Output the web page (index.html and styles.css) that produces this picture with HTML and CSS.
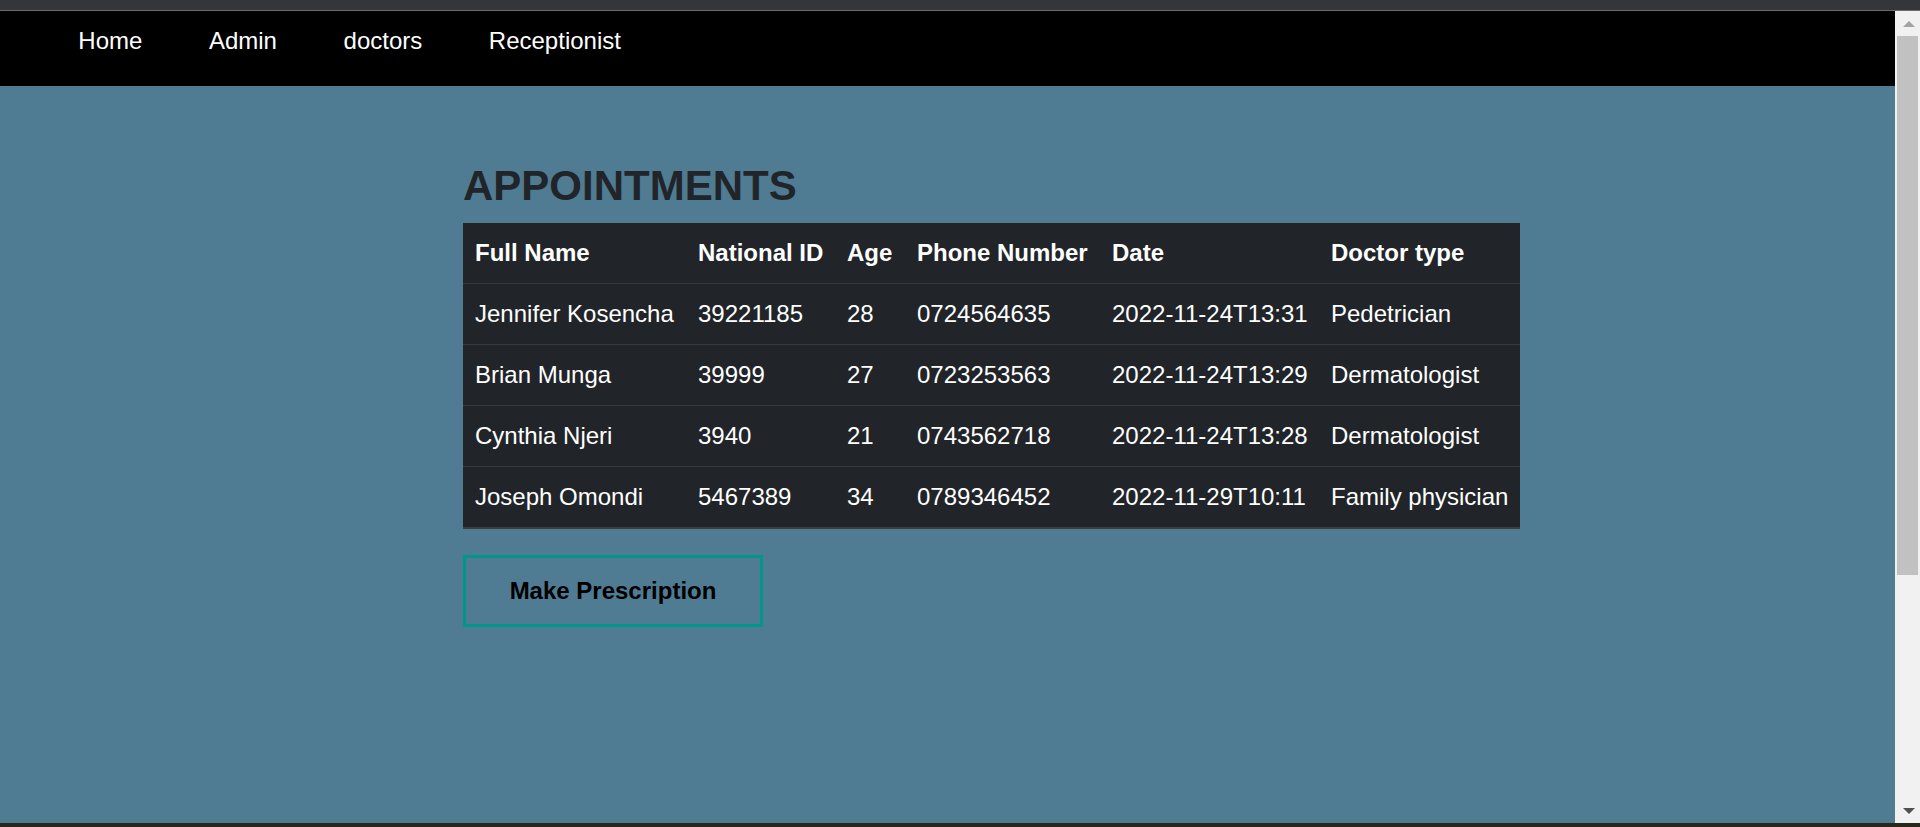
FILE: index.html
```html
<!DOCTYPE html>
<html lang="en">
<head>
<meta charset="utf-8">
<title>Appointments</title>
<link rel="stylesheet" href="styles.css">
</head>
<body>
<div class="window">
  <div class="chrome-top"></div>
  <div class="viewport">
    <div class="page">
      <nav class="navbar">
        <a class="nav-link" href="#">Home</a>
        <a class="nav-link" href="#">Admin</a>
        <a class="nav-link" href="#">doctors</a>
        <a class="nav-link" href="#">Receptionist</a>
      </nav>
      <main class="content">
        <h1 class="title">APPOINTMENTS</h1>
        <table class="appointments">
          <thead>
            <tr>
              <th class="col-name">Full Name</th>
              <th class="col-id">National ID</th>
              <th class="col-age">Age</th>
              <th class="col-phone">Phone Number</th>
              <th class="col-date">Date</th>
              <th class="col-type">Doctor type</th>
            </tr>
          </thead>
          <tbody>
            <tr>
              <td>Jennifer Kosencha</td><td>39221185</td><td>28</td><td>0724564635</td><td>2022-11-24T13:31</td><td>Pedetrician</td>
            </tr>
            <tr>
              <td>Brian Munga</td><td>39999</td><td>27</td><td>0723253563</td><td>2022-11-24T13:29</td><td>Dermatologist</td>
            </tr>
            <tr>
              <td>Cynthia Njeri</td><td>3940</td><td>21</td><td>0743562718</td><td>2022-11-24T13:28</td><td>Dermatologist</td>
            </tr>
            <tr>
              <td>Joseph Omondi</td><td>5467389</td><td>34</td><td>0789346452</td><td>2022-11-29T10:11</td><td>Family physician</td>
            </tr>
          </tbody>
        </table>
        <button class="btn-prescription" type="button">Make Prescription</button>
      </main>
    </div>
    <div class="scrollbar">
      <div class="sb-button"><span class="arrow-up"></span></div>
      <div class="sb-track"><div class="sb-thumb"></div></div>
      <div class="sb-button"><span class="arrow-down"></span></div>
    </div>
  </div>
  <div class="chrome-bottom"></div>
</div>
</body>
</html>
```

FILE: styles.css
```css
html, body {
  margin: 0;
  padding: 0;
  overflow: hidden;
}

body {
  font-family: "Liberation Sans", Arial, sans-serif;
}

.window {
  width: 1920px;
  height: 827px;
  display: flex;
  flex-direction: column;
}

.chrome-top {
  flex: none;
  height: 10px;
  background: #35363a;
  border-bottom: 1px solid #6b6b6b;
}

.viewport {
  flex: 1;
  display: flex;
  min-height: 0;
}

.page {
  flex: 1;
  display: flex;
  flex-direction: column;
  background: #4f7c93;
}

.chrome-bottom {
  flex: none;
  height: 4px;
  background: #2b261c;
}

/* Navbar */
.navbar {
  flex: none;
  height: 75px;
  box-sizing: border-box;
  background: #000;
  display: flex;
  align-items: flex-start;
  padding: 16px 0 0 45px;
}

.nav-link {
  color: #fff;
  text-decoration: none;
  font-size: 24px;
  line-height: 27.6px;
  padding: 0 33.3px;
}

/* Content */
.content {
  padding: 75px 0 0 463px;
}

.title {
  margin: 0 0 12px;
  font-size: 42px;
  line-height: 1.2;
  font-weight: 700;
  color: #212529;
}

.appointments {
  width: 1057px;
  table-layout: fixed;
  border-collapse: collapse;
  background: #212529;
  color: #fff;
  font-size: 24px;
  line-height: 36px;
}

.appointments th,
.appointments td {
  box-sizing: border-box;
  padding: 12px;
  text-align: left;
  white-space: nowrap;
  border-bottom: 1px solid #373b3e;
}

.appointments th {
  font-weight: 700;
}

.appointments tbody tr:last-child td {
  border-bottom: 2px solid #3b3f43;
}

.col-name { width: 223px; }
.col-id { width: 149px; }
.col-age { width: 70px; }
.col-phone { width: 195px; }
.col-date { width: 219px; }
.col-type { width: 201px; }

.btn-prescription {
  display: block;
  margin-top: 26px;
  width: 300px;
  height: 72px;
  box-sizing: border-box;
  border: 3px solid #009688;
  background: transparent;
  color: #000;
  font-family: "Liberation Sans", Arial, sans-serif;
  font-size: 24px;
  font-weight: 700;
  line-height: 36px;
  padding: 0;
  cursor: pointer;
}

/* Fake scrollbar */
.scrollbar {
  flex: none;
  width: 25px;
  display: flex;
  flex-direction: column;
  background: #f1f1f1;
}

.sb-button {
  flex: none;
  height: 25px;
  display: flex;
  align-items: center;
  justify-content: center;
  padding-left: 2px;
}

.arrow-up {
  width: 0;
  height: 0;
  border-left: 6px solid transparent;
  border-right: 6px solid transparent;
  border-bottom: 6px solid #a3a3a3;
}

.arrow-down {
  width: 0;
  height: 0;
  border-left: 6px solid transparent;
  border-right: 6px solid transparent;
  border-top: 6px solid #505050;
}

.sb-track {
  flex: 1;
  display: flex;
  flex-direction: column;
}

.sb-thumb {
  height: 539px;
  margin: 0 2px 0 2px;
  background: #c1c1c1;
}
```
